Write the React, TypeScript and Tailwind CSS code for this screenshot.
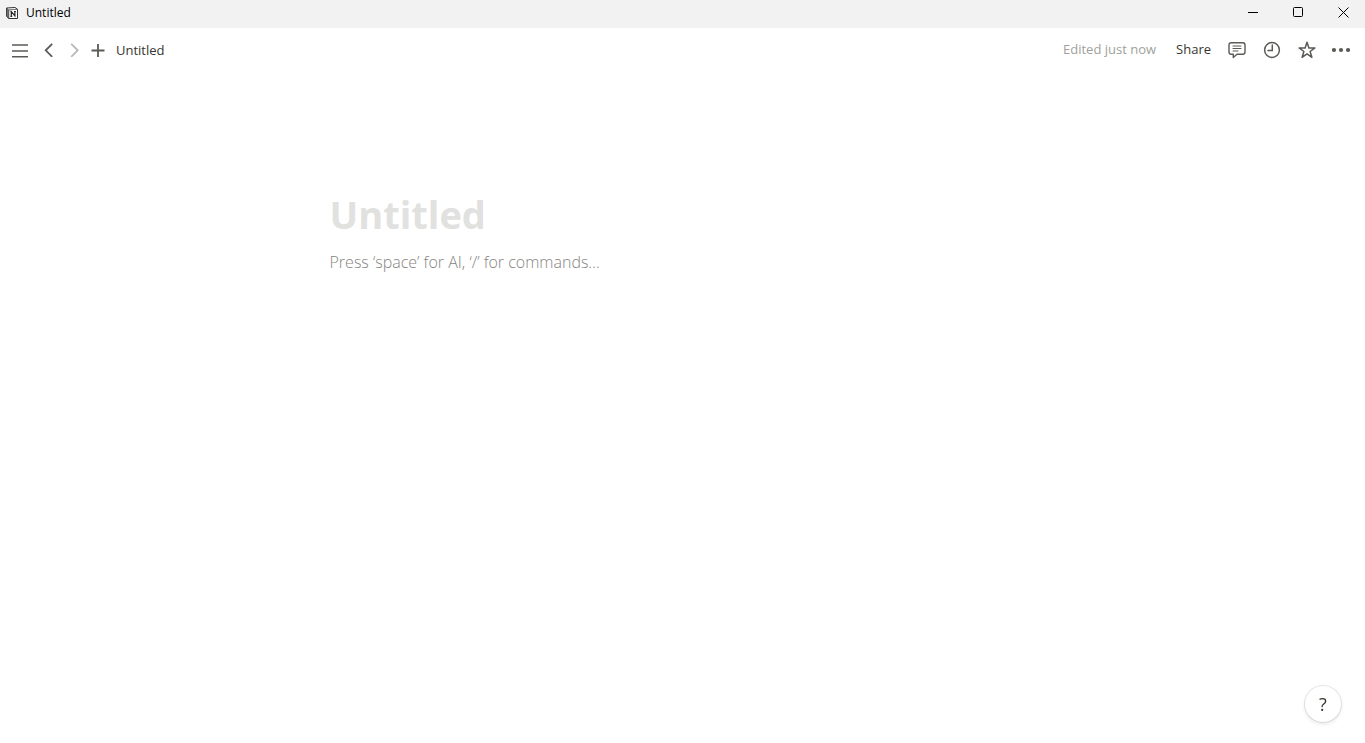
import type { ReactNode } from "react";

function IconButton({ label, className, children }: { label: string; className: string; children: ReactNode }) {
  return (
    <button type="button" aria-label={label} className={`flex shrink-0 items-center justify-center rounded ${className}`}>
      {children}
    </button>
  );
}

function TitleBar() {
  return (
    <header className="flex h-7 items-start justify-between bg-[#f2f2f2] text-black">
      <div className="flex h-[25px] items-center gap-2 pl-[6px]">
        <svg width="12" height="12" viewBox="0 0 12 12" fill="none" aria-hidden="true">
          <path d="M.6 1 9 .5l2.5 1.8v9.2H2.7L.6 9Z" fill="#fff" stroke="#333" />
          <path d="M.6 1.1 2.8 3v8.4L.6 9Z" fill="#777" stroke="#333" strokeWidth=".7" />
          <path d="m2.9 2.8 8.600-.5" stroke="#333" strokeWidth=".7" />
          <path d="M5.3 9.3V4.700l3.600 4.200V4.500M4.400 4.700h1.400M4.400 9.300h1.800M8 4.500h1.900" stroke="#222" strokeWidth="1.2" />
        </svg>
        <span className="text-[12px] leading-6">Untitled</span>
      </div>
      <div className="flex">
        <IconButton label="Minimize" className="h-6 w-[45px]">
          <svg width="10" height="10" viewBox="0 0 10 10" stroke="currentColor"><path d="M0 5.5h10" /></svg>
        </IconButton>
        <IconButton label="Maximize" className="h-6 w-[46px]">
          <svg width="10" height="10" viewBox="0 0 10 10" fill="none" stroke="currentColor"><rect x=".5" y=".5" width="9" height="9" rx="1" /></svg>
        </IconButton>
        <IconButton label="Close" className="h-6 w-11">
          <svg width="11" height="11" viewBox="0 0 11 11" stroke="currentColor"><path d="m.5.5 10 10M10.5.5l-10 10" /></svg>
        </IconButton>
      </div>
    </header>
  );
}

function Toolbar() {
  return (
    <nav className="flex h-11 items-center justify-between px-2 text-[#5b5a56]">
      <div className="flex items-center">
        <IconButton label="Open sidebar" className="size-6">
          <svg width="16" height="16" viewBox="0 0 16 16" fill="none" stroke="currentColor" strokeWidth="1.6"><path d="M0 3h16M0 9h16M0 14.800h16" /></svg>
        </IconButton>
        <IconButton label="Go back" className="ml-1 size-6">
          <svg width="10" height="14" viewBox="0 0 10 14" fill="none" stroke="currentColor" strokeWidth="1.8"><path d="M9.200.8 2.700 7.300l6.500 6.500" /></svg>
        </IconButton>
        <IconButton label="Go forward" className="ml-0.5 size-6 text-[#b8b7b5]">
          <svg width="10" height="14" viewBox="0 0 10 14" fill="none" stroke="currentColor" strokeWidth="1.8"><path d="M2.200.8l6.500 6.500-6.500 6.500" /></svg>
        </IconButton>
        <IconButton label="New tab" className="size-6">
          <svg width="14" height="14" viewBox="0 0 14 14" fill="none" stroke="currentColor" strokeWidth="1.8"><path d="M7 1v13M.5 7.5h13" /></svg>
        </IconButton>
        <a href="#page" className="ml-1.5 text-[13px] leading-5 text-[#37352f]">Untitled</a>
      </div>
      <div className="flex items-center">
        <span className="pb-0.5 text-[13px] leading-5 text-[#a09f9c]">Edited just now</span>
        <button type="button" className="ml-3 h-7 px-2 pb-0.5 text-[13px] leading-5 text-[#37352f]">Share</button>
        <IconButton label="Comments" className="h-7 w-[35px]">
          <svg width="18" height="18" viewBox="0 0 18 18" fill="none" stroke="currentColor" strokeWidth="1.4" strokeLinejoin="round" strokeLinecap="round">
            <path d="M3.200 1.700h11.600a2.200 2.200 0 0 1 2.200 2.200v7.200a2.200 2.200 0 0 1-2.200 2.200H9l-3.700 3.200v-3.200H3.200A2.200 2.200 0 0 1 1 11.100V3.900a2.200 2.200 0 0 1 2.200-2.200Z" />
            <path d="M5 5h8M5 7.500h8M5 10h5" strokeWidth="1.1" />
          </svg>
        </IconButton>
        <IconButton label="Updates" className="h-7 w-[35px]">
          <svg width="18" height="18" viewBox="0 0 18 18" fill="none" stroke="currentColor" strokeWidth="1.5">
            <circle cx="9" cy="9" r="7.4" /><path d="M9.300 4v5.400H5" strokeLinecap="round" />
          </svg>
        </IconButton>
        <IconButton label="Favorite" className="h-7 w-[35px]">
          <svg width="18" height="18" viewBox="0 0 18 18" fill="none" stroke="currentColor" strokeWidth="1.5" strokeLinejoin="round">
            <path d="m9 1.300 1.900 5.600h6l-4.800 3.600 1.800 5.800L9 12.900l-4.900 3.400 1.800-5.800-4.800-3.600h6Z" />
          </svg>
        </IconButton>
        <IconButton label="More" className="h-7 w-[33px]">
          <svg width="18" height="18" viewBox="0 0 18 18" fill="currentColor">
            <circle cx="2" cy="9" r="2.1" /><circle cx="9" cy="9" r="2.1" /><circle cx="16" cy="9" r="2.1" />
          </svg>
        </IconButton>
      </div>
    </nav>
  );
}

export default function App() {
  return (
    <div className="relative flex min-h-screen flex-col bg-white font-['Open_Sans','Noto_Sans',sans-serif]">
      <TitleBar />
      <Toolbar />
      <main id="page" className="mx-auto flex w-full max-w-[898px] grow flex-col px-24 pt-[118px]">
        <input
          aria-label="Page title"
          placeholder="Untitled"
          className="h-12 w-full bg-transparent text-[38px] leading-[48px] font-bold text-[#37352f] outline-none placeholder:text-[#e1e1e0] placeholder:opacity-100"
        />
        <input
          aria-label="Page content"
          placeholder="Press ‘space’ for AI, ‘/’ for commands…"
          className="mt-3 h-6 w-full bg-transparent text-[16px] leading-6 font-light text-[#37352f] outline-none placeholder:text-[#868581] placeholder:opacity-100"
        />
      </main>
      <button
        type="button"
        aria-label="Help"
        className="fixed right-6 bottom-[21px] flex size-9 items-center justify-center rounded-full bg-white text-[18px] text-[#37352f] shadow-[0_0_0_1px_rgba(15,15,15,0.1),0_2px_4px_rgba(15,15,15,0.1)]"
      >
        ?
      </button>
    </div>
  );
}
